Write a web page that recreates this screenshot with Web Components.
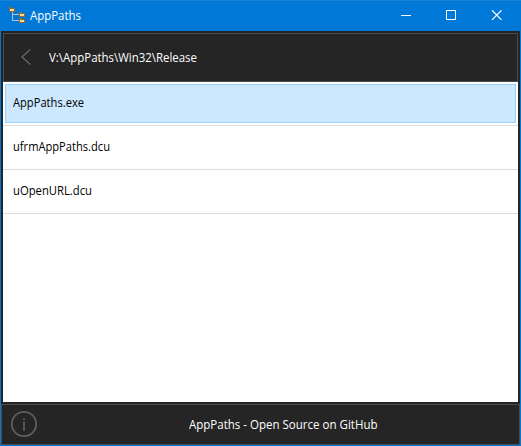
<!DOCTYPE html>
<html lang="en">
<head>
<meta charset="utf-8">
<title>AppPaths</title>
<style>
html,body{margin:0;height:100%;overflow:hidden}
body{font:12px/18px "Open Sans","Noto Sans",sans-serif;color:#000}
</style>
</head>
<body>
<app-window>
  <title-bar slot="title"><fit-text width="51">AppPaths</fit-text></title-bar>
  <path-header slot="header"><fit-text width="148">V:\AppPaths\Win32\Release</fit-text></path-header>
  <file-row selected><fit-text width="71">AppPaths.exe</fit-text></file-row>
  <file-row><fit-text width="97">ufrmAppPaths.dcu</fit-text></file-row>
  <file-row><fit-text width="79">uOpenURL.dcu</fit-text></file-row>
  <status-footer slot="footer"><fit-text width="188.500">AppPaths - Open Source on GitHub</fit-text></status-footer>
</app-window>
<script>
const define = (name, html) =>
  customElements.define(name, class extends HTMLElement {
    constructor() {
      super();
      const t = document.createElement('template');
      t.innerHTML = html;
      this.attachShadow({mode: 'open'}).append(t.content.cloneNode(true));
    }
  });

// A label whose glyphs are condensed or widened to a given advance width.
customElements.define('fit-text', class extends HTMLElement {
  constructor() {
    super();
    this.attachShadow({mode: 'open'}).innerHTML =
      '<style>:host{display:block;white-space:pre}span{display:inline-block;transform-origin:0 50%}</style><span><slot></slot></span>';
  }
  connectedCallback() {
    const want = +this.getAttribute('width');
    this.style.width = want + 'px';
    const span = this.shadowRoot.querySelector('span');
    const natural = span.getBoundingClientRect().width;
    span.style.transform = `scaleX(${want / natural})`;
  }
});

define('app-window', `<style>
:host{display:flex;flex-direction:column;box-sizing:border-box;width:521px;height:446px;background:#0078d7}
.body{flex:1;display:flex;flex-direction:column;margin:0 1px 1px;background:#252525;min-height:0}
.inner{display:flex;flex-direction:column;flex:1;padding:2px}
.list{flex:1;background:#fff}
</style>
<slot name="title"></slot>
<div class="body"><div class="inner"><slot name="header"></slot><div class="list"><slot></slot></div></div><slot name="footer"></slot></div>`);

define('title-bar', `<style>
:host{display:flex;align-items:center;height:31px;box-sizing:border-box;border-top:1px solid #1683d9;color:#fff}
svg{display:block}
.icon{margin:-2px 5px 0 9px}
.buttons{margin-left:auto;margin-right:17px}
</style>
<svg class="icon" width="16" height="16" shape-rendering="crispEdges">
<path d="M3.500 5v9M3 7.500h7M3 13.500h7" fill="none" stroke="#b4c0cb"/>
<g><path d="M0 0h3v1h3v4H0z" fill="#8b6c42"/><path d="M1 2h4v2H1z" fill="#ffd88b"/></g>
<g transform="translate(10 5)"><path d="M0 0h3v1h3v4H0z" fill="#8b6c42"/><path d="M1 2h4v2H1z" fill="#ffd88b"/></g>
<g transform="translate(10 11)"><path d="M0 0h3v1h3v4H0z" fill="#8b6c42"/><path d="M1 2h4v2H1z" fill="#ffd88b"/></g>
</svg>
<slot></slot>
<svg class="buttons" width="103" height="12" fill="none" stroke="#fff">
<path d="M0 5.500h10M45.500 .5h9v9h-9z" shape-rendering="crispEdges"/>
<path d="M91 .3l9.500 9.500M100.500 .3l-9.500 9.500" stroke-width="1.200"/>
</svg>`);

define('path-header', `<style>
:host{display:flex;align-items:center;box-sizing:border-box;height:49px;border:1px solid #4b4b4b;color:#fff}
svg{margin:-2px 18px 0 17px}
</style>
<svg width="10" height="18"><path d="M9.300 1.500L1 9l8.300 7.500" fill="none" stroke="#666" stroke-width="1.400"/></svg>
<slot></slot>`);

define('file-row', `<style>
:host{display:block;box-sizing:border-box;height:44px;padding:2px;border-bottom:1px solid #dcdcdc}
div{box-sizing:border-box;height:39px;padding:9px 7px 8px;border:1px solid transparent}
:host([selected]) div{background:#cce8ff;border-color:#99d1ff}
</style><div><slot></slot></div>`);

define('status-footer', `<style>
:host{display:grid;grid-template-columns:187px auto;align-items:center;box-sizing:border-box;height:41px;border:1px solid #4b4b4b;color:#fff}
svg{margin-left:8px;display:block;margin-top:-2px}
</style>
<svg width="28" height="28"><g fill="none" stroke="#5e5e5e"><circle cx="14" cy="14" r="12.200" stroke-width="1.800"/><path d="M14 11.500v9.500M14 8v2" stroke-width="1.700"/></g></svg>
<slot></slot>`);
</script>
</body>
</html>
